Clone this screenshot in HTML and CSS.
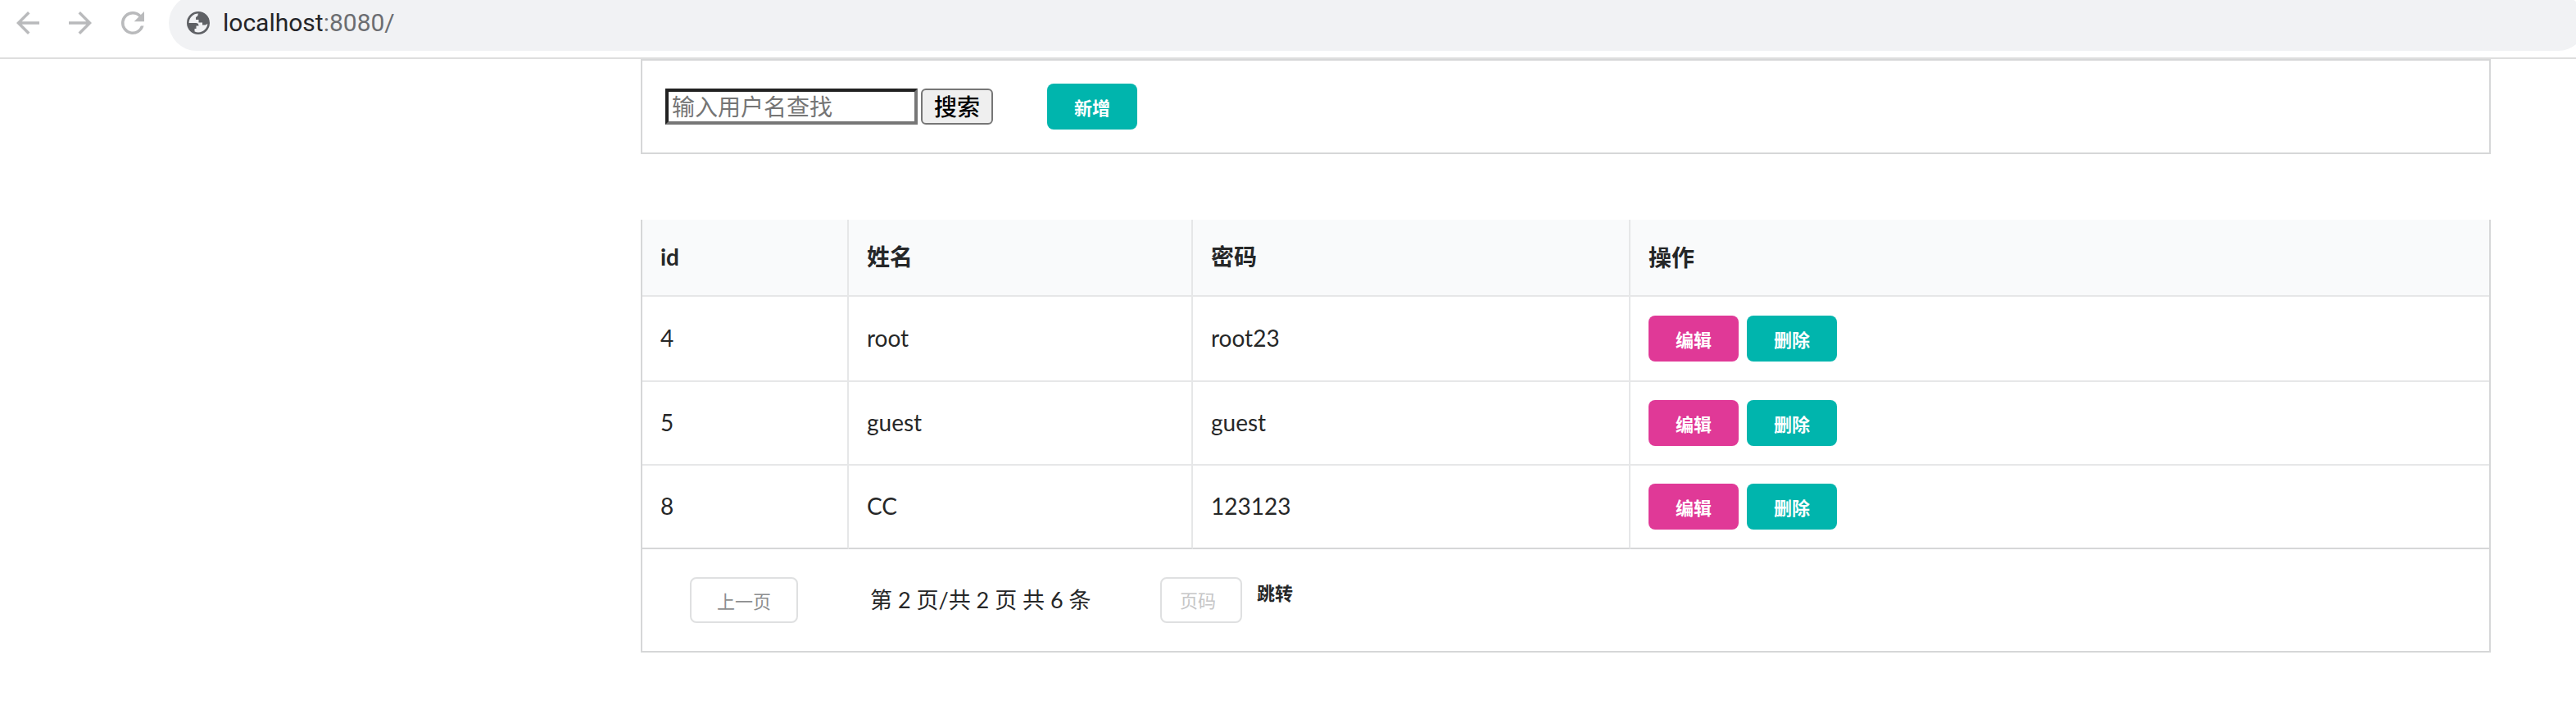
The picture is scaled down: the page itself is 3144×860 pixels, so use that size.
FILE: index.html
```html
<!DOCTYPE html>
<html lang="zh-CN">
<head>
<meta charset="utf-8">
<title>用户管理</title>
<link rel="stylesheet" href="styles.css">
</head>
<body>
<header class="browser-bar">
  <nav class="nav-buttons">
    <button class="nav-button" type="button" aria-label="后退"><svg viewBox="0 0 24 24"><path d="M20 11H7.83l5.59-5.59L12 4l-8 8 8 8 1.41-1.41L7.83 13H20v-2z"/></svg></button>
    <button class="nav-button" type="button" aria-label="前进"><svg viewBox="0 0 24 24"><path d="M12 4l-1.41 1.41L16.17 11H4v2h12.17l-5.58 5.59L12 20l8-8z"/></svg></button>
    <button class="nav-button" type="button" aria-label="刷新"><svg viewBox="0 0 24 24"><path d="M17.65 6.35A7.96 7.96 0 0 0 12 4a8 8 0 1 0 7.73 10h-2.08A6 6 0 1 1 12 6c1.66 0 3.14.69 4.22 1.78L13 11h7V4l-2.35 2.35z"/></svg></button>
  </nav>
  <div class="address">
    <svg class="globe" viewBox="0 0 28 28"><circle cx="14" cy="14" r="12.7" fill="none" stroke="currentColor" stroke-width="2.6"/><path d="M15 1.500c-1 1-1.500 1.500-1.500 3c0 1.800-2.500 1.500-2.500 3.500v2h3.500v3.500h4.500v3h3.500l4-2c1-6-3-12-11.500-13zM1.500 14h9.500c2 0 3.500 1 3.500 3.500h-3V21h-2v4C5 23.500 1.500 19 1.500 14z"/></svg>
    <span class="url">localhost<span class="url-rest">:8080/</span></span>
  </div>
</header>
<main class="page">
  <form class="panel search">
    <input class="search-input" type="text" placeholder="输入用户名查找" aria-label="输入用户名查找">
    <button class="search-button" type="button">搜索</button>
    <button class="btn teal add" type="button">新增</button>
  </form>
  <section class="users">
    <table class="user-table">
      <colgroup><col class="col-id"><col class="col-name"><col class="col-password"><col></colgroup>
      <thead><tr><th>id</th><th>姓名</th><th>密码</th><th>操作</th></tr></thead>
      <tbody>
        <tr><td>4</td><td>root</td><td>root23</td><td><div class="actions"><button class="btn pink" type="button">编辑</button><button class="btn teal" type="button">删除</button></div></td></tr>
        <tr><td>5</td><td>guest</td><td>guest</td><td><div class="actions"><button class="btn pink" type="button">编辑</button><button class="btn teal" type="button">删除</button></div></td></tr>
        <tr><td>8</td><td>CC</td><td>123123</td><td><div class="actions"><button class="btn pink" type="button">编辑</button><button class="btn teal" type="button">删除</button></div></td></tr>
      </tbody>
    </table>
    <footer class="pager">
      <button class="prev" type="button">上一页</button>
      <span class="summary">第 2 页/共 2 页 共 6 条</span>
      <input class="page-input" type="text" placeholder="页码" aria-label="页码">
      <button class="jump" type="button">跳转</button>
    </footer>
  </section>
</main>
</body>
</html>
```
FILE: styles.css
```css
* { box-sizing: border-box; }

body {
  margin: 0;
  background: #fff;
  color: #262728;
  font: 28px/40px Lato, "Noto Sans CJK SC", sans-serif;
  overflow-x: hidden;
}

button, input { margin: 0; font-family: inherit; }
button { cursor: pointer; }

.browser-bar {
  display: flex;
  height: 72px;
  padding-left: 13px;
  border-bottom: 2px solid #dedede;
  overflow: hidden;
}

.nav-buttons { display: flex; gap: 22px; padding-top: 7px; }
.nav-button { width: 42px; height: 42px; padding: 0; border: 0; background: none; }
.nav-button svg { display: block; fill: #b9babc; }

.address {
  display: flex;
  flex: 1;
  align-items: center;
  gap: 16px;
  height: 68px;
  margin: -6px -12px 0 23px;
  padding-left: 22px;
  border-radius: 34px;
  background: #f1f2f4;
}

.globe { width: 28px; height: 28px; color: #5f6165; fill: currentColor; }
.url { color: #242528; font-family: Roboto, sans-serif; font-size: 30px; }
.url-rest { color: #6b6d71; }

.page { padding: 0 104px 64px 782px; }

.panel {
  display: flex;
  align-items: center;
  height: 116px;
  padding: 0 28px;
  border: 2px solid #d6d7d8;
}

.search-input {
  width: 308px;
  height: 44px;
  padding: 0 4px;
  border: 4px inset #767676;
  font-size: 28px;
}
.search-input::placeholder { color: #757575; }

.search-button {
  width: 88px;
  height: 44px;
  margin-left: 4px;
  padding: 0;
  border: 2px solid #767676;
  border-radius: 6px;
  background: #efefef;
  color: #000;
  font-size: 28px;
  font-weight: 500;
  line-height: 40px;
}

.btn {
  width: 110px;
  height: 56px;
  padding: 0;
  border: 0;
  border-radius: 8px;
  color: #fff;
  font-size: 22px;
  font-weight: 700;
}
.teal { background: #00b5ad; }
.pink { background: #e03997; }
.add { margin-left: 66px; }

.users {
  margin-top: 80px;
  border: 2px solid #d6d7d8;
  border-top: 0;
}

.user-table { width: 100%; table-layout: fixed; border-collapse: separate; border-spacing: 0; }
.col-id { width: 252px; }
.col-name { width: 420px; }
.col-password { width: 534px; }

.user-table th, .user-table td {
  height: 102px;
  padding: 0 22px 2px;
  border-right: 2px solid #e6e7e8;
  border-bottom: 2px solid #e6e7e8;
  text-align: left;
}
.user-table th { height: 94px; background: #f9fafb; font-weight: 700; }
.user-table tbody tr:first-child td { height: 104px; }
.user-table tr > :last-child { padding-bottom: 0; border-right: 0; }
.user-table tbody tr:last-child td { border-bottom-color: #d6d7d8; }

.actions { display: flex; gap: 10px; }

.pager { display: flex; align-items: center; height: 124px; padding: 0 58px; }

.prev, .page-input {
  height: 56px;
  border: 2px solid #dfe0e1;
  border-radius: 8px;
  background: #fff;
  font-size: 22px;
}
.prev { width: 132px; padding: 0; color: #8d8e8f; }
.summary { margin-left: 88px; width: 354px; font-size: 27px; white-space: nowrap; }
.page-input { width: 100px; padding: 0 22px; }
.page-input::placeholder { color: #c6c6c7; }

.jump {
  align-self: flex-start;
  margin: 34px 0 0 18px;
  padding: 0;
  border: 0;
  background: none;
  color: #262728;
  font-size: 22px;
  font-weight: 700;
  line-height: 40px;
}
```
